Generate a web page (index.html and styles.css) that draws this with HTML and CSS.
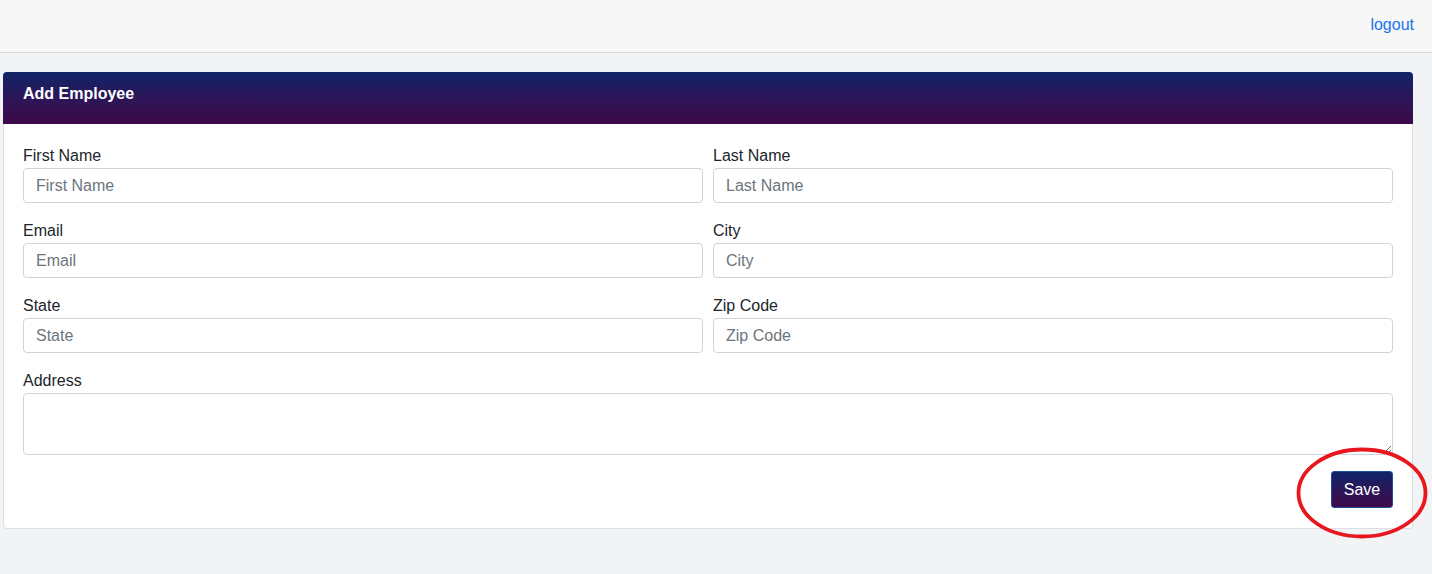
FILE: index.html
```html
<!DOCTYPE html>
<html>
<head>
<meta charset="utf-8">
<link rel="stylesheet" href="styles.css">
</head>
<body>
<header class="topbar">
  <a class="logout" href="#">logout</a>
</header>
<main class="page">
  <section class="card">
    <div class="card-header">Add Employee</div>
    <form class="card-body">
      <div class="grid">
        <div class="field">
          <label>First Name</label>
          <input type="text" placeholder="First Name">
        </div>
        <div class="field">
          <label>Last Name</label>
          <input type="text" placeholder="Last Name">
        </div>
        <div class="field">
          <label>Email</label>
          <input type="text" placeholder="Email">
        </div>
        <div class="field">
          <label>City</label>
          <input type="text" placeholder="City">
        </div>
        <div class="field">
          <label>State</label>
          <input type="text" placeholder="State">
        </div>
        <div class="field">
          <label>Zip Code</label>
          <input type="text" placeholder="Zip Code">
        </div>
        <div class="field full">
          <label>Address</label>
          <textarea></textarea>
        </div>
      </div>
      <div class="actions">
        <button type="button" class="btn-save">Save</button>
        <svg class="annotation" width="140" height="100" viewBox="0 0 140 100">
          <ellipse cx="70" cy="50" rx="63.5" ry="43.5" fill="none" stroke="#e8161e" stroke-width="3.8"/>
        </svg>
      </div>
    </form>
  </section>
</main>
</body>
</html>
```
FILE: styles.css
```css
* { box-sizing: border-box; }
html, body { margin: 0; padding: 0; }
body {
  background: #f2f3f5;
  font-family: "Liberation Sans", Arial, sans-serif;
  font-size: 16px;
  color: #212529;
  height: 574px;
  overflow: hidden;
}
.topbar {
  height: 53px;
  background: #f7f7f8;
  border-bottom: 1px solid #d9d9d9;
  display: flex;
  justify-content: flex-end;
  align-items: center;
  padding: 0 18px 2px 0;
}
.logout {
  color: #1a73e8;
  text-decoration: none;
  font-size: 16px;
}
.page {
  padding: 19px 19px 0 3px;
}
.card {
  background: #fff;
  border: 1px solid #dddfe2;
  border-radius: 4px;
}
.card-header {
  height: 52px;
  margin: -1px -1px 0 -1px;
  border-radius: 4px 4px 0 0;
  background: linear-gradient(to bottom, #0f2467 0%, #2a175a 45%, #3e0948 100%);
  color: #fff;
  font-weight: bold;
  font-size: 16px;
  display: flex;
  align-items: center;
  padding: 0 20px 9px 20px;
}
.card-body {
  padding: 20px 19px 20px 19px;
}
.grid {
  display: grid;
  grid-template-columns: 1fr 1fr;
  column-gap: 10px;
  row-gap: 16px;
}
.field { display: flex; flex-direction: column; }
.field.full { grid-column: 1 / 3; }
.field label {
  line-height: 24px;
  height: 24px;
  color: #212529;
}
.field input, .field textarea {
  font-family: "Liberation Sans", Arial, sans-serif;
  font-size: 16px;
  border: 1px solid #ced4da;
  border-radius: 4px;
  padding: 0 12px;
  color: #495057;
  background: #fff;
  outline: none;
}
.field input { height: 35px; }
.field textarea { height: 62px; padding: 6px 12px; }
.field input::placeholder { color: #6c757d; }
.actions {
  position: relative;
  display: flex;
  justify-content: flex-end;
  margin-top: 16px;
}
.btn-save {
  width: 62px;
  height: 37px;
  font-family: "Liberation Sans", Arial, sans-serif;
  font-size: 16px;
  color: #fff;
  border: 1px solid #1d4f9c;
  border-radius: 3px;
  background: linear-gradient(to bottom, #0f2467 0%, #2a175a 50%, #3e0948 100%);
  padding: 0;
}
.annotation {
  position: absolute;
  right: -39px;
  top: -28px;
  pointer-events: none;
}
```
